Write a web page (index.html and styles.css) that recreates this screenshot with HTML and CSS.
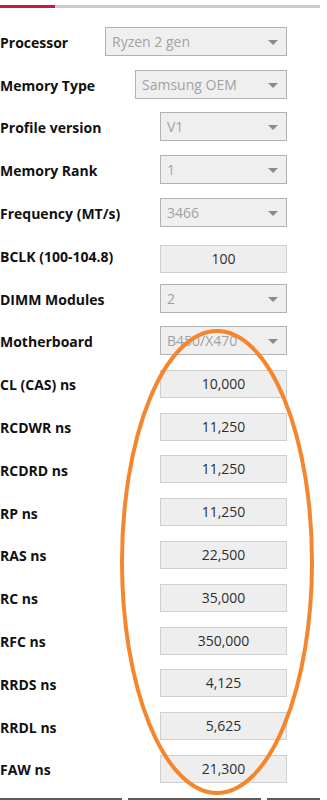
FILE: index.html
```html
<!DOCTYPE html>
<html lang="en">
<head>
  <meta charset="UTF-8">
  <meta name="viewport" content="width=device-width, initial-scale=1.0">
  <title>Timing calculator</title>
  <link rel="stylesheet" href="styles.css">
</head>
<body>
<div class="page">
  <div class="tabs">
    <div class="tab-active"></div>
    <div class="tab-rest"></div>
  </div>

  <!-- parametres de base -->
  <div class="form">
    <div class="row">
      <span class="label">Processor</span>
      <div class="select wide">Ryzen 2 gen</div>
    </div>
    <div class="row">
      <span class="label">Memory Type</span>
      <div class="select mid">Samsung OEM</div>
    </div>
    <div class="row">
      <span class="label">Profile version</span>
      <div class="select">V1</div>
    </div>
    <div class="row">
      <span class="label">Memory Rank</span>
      <div class="select">1</div>
    </div>
    <div class="row">
      <span class="label">Frequency (MT/s)</span>
      <div class="select">3466</div>
    </div>
    <div class="row">
      <span class="label">BCLK (100-104.8)</span>
      <div class="field bclk">100</div>
    </div>
    <div class="row">
      <span class="label">DIMM Modules</span>
      <div class="select">2</div>
    </div>
    <div class="row">
      <span class="label">Motherboard</span>
      <div class="select">B450/X470</div>
    </div>

    <!-- timings en ns -->
    <div class="row">
      <span class="label">CL (CAS) ns</span>
      <div class="field">10,000</div>
    </div>
    <div class="row">
      <span class="label">RCDWR ns</span>
      <div class="field">11,250</div>
    </div>
    <div class="row">
      <span class="label">RCDRD ns</span>
      <div class="field">11,250</div>
    </div>
    <div class="row">
      <span class="label">RP ns</span>
      <div class="field">11,250</div>
    </div>
    <div class="row">
      <span class="label">RAS ns</span>
      <div class="field">22,500</div>
    </div>
    <div class="row">
      <span class="label">RC ns</span>
      <div class="field">35,000</div>
    </div>
    <div class="row">
      <span class="label">RFC ns</span>
      <div class="field">350,000</div>
    </div>
    <div class="row">
      <span class="label">RRDS ns</span>
      <div class="field">4,125</div>
    </div>
    <div class="row">
      <span class="label">RRDL ns</span>
      <div class="field">5,625</div>
    </div>
    <div class="row">
      <span class="label">FAW ns</span>
      <div class="field">21,300</div>
    </div>
  </div>

  <div class="footer">
    <div class="btn btn-a"></div>
    <div class="btn btn-b"></div>
    <div class="btn btn-c"></div>
  </div>

  <!-- annotation par dessus -->
  <svg class="mark" width="327" height="800" viewBox="0 0 327 800">
    <ellipse cx="217" cy="562" rx="95" ry="231" fill="none" stroke="#f5862e" stroke-width="4"/>
  </svg>
</div>
</body>
</html>
```

FILE: styles.css
```css
body {
  margin: 0;
  padding: 0;
  background-color: #fff;
  font-family: 'Open Sans', 'Noto Sans', sans-serif;
  overflow: hidden;
}

.page {
  position: relative;
  width: 327px;
  height: 800px;
  overflow: hidden;
}

.tabs {
  display: flex;
  width: 320px;
  padding-top: 5px;
}
.tab-active {
  width: 55px;
  height: 3px;
  background-color: #c8193e;
}
.tab-rest {
  flex: 1;
  height: 3px;
  background-color: #cccccc;
}

.form {
  width: 287px;
  padding-top: 12px;
}
.row {
  display: flex;
  align-items: center;
  justify-content: space-between;
  height: 42.8px;
}
.label {
  font-weight: 700;
  font-size: 14px;
  color: #111;
  white-space: nowrap;
  margin-top: 2px;
}

.select {
  position: relative;
  box-sizing: border-box;
  width: 127px;
  height: 29px;
  line-height: 27px;
  padding-left: 6px;
  background-color: #efefef;
  border: 1px solid #b2b2b2;
  color: #a2a2a2;
  font-size: 14px;
}
.select::after {
  content: "";
  position: absolute;
  right: 8px;
  top: 12px;
  border-top: 5px solid #8c8c8c;
  border-left: 5px solid transparent;
  border-right: 5px solid transparent;
}
.select.wide {
  width: 182px;
}
.select.mid {
  width: 152px;
}

.field {
  box-sizing: border-box;
  width: 127px;
  height: 28px;
  line-height: 26px;
  text-align: center;
  background-color: #eeeeee;
  border: 1px solid #cfcfcf;
  color: #2e2e2e;
  font-size: 14px;
}
.field.bclk {
  margin-top: 8px;
}

.footer {
  display: flex;
  gap: 6px;
  margin-top: 8px;
}
.btn {
  height: 4px;
  border-top: 2px solid #5c5c5c;
}
.btn-a { width: 122px; }
.btn-b { width: 133px; }
.btn-c { width: 53px; }

.mark {
  position: absolute;
  left: 0;
  top: 0;
  pointer-events: none;
}
```
